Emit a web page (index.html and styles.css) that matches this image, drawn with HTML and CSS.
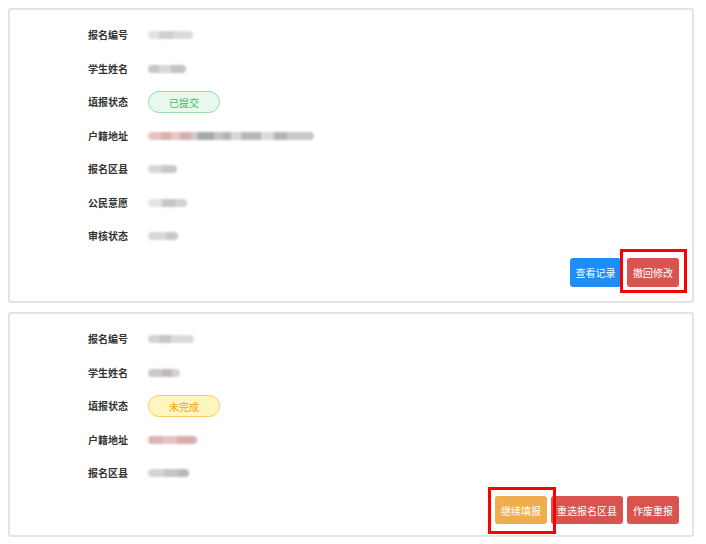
FILE: index.html
```html
<!DOCTYPE html>
<html lang="zh">
<head>
<meta charset="utf-8">
<link rel="stylesheet" href="styles.css">
</head>
<body>
<div class="card card-1">
  <div class="rows">
    <div class="row"><span class="label">报名编号</span><span class="blob b-g45"></span></div>
    <div class="row"><span class="label">学生姓名</span><span class="blob b-g38"></span></div>
    <div class="row"><span class="label">填报状态</span><span class="badge badge-ok">已提交</span></div>
    <div class="row"><span class="label">户籍地址</span><span class="blob b-addr"></span></div>
    <div class="row"><span class="label">报名区县</span><span class="blob b-g29"></span></div>
    <div class="row"><span class="label">公民意愿</span><span class="blob b-g39"></span></div>
    <div class="row"><span class="label">审核状态</span><span class="blob b-g30"></span></div>
  </div>
  <div class="actions actions-1">
    <button class="btn btn-blue btn-narrow">查看记录</button>
    <span class="mark-wrap"><button class="btn btn-red">撤回修改</button><span class="mark mark-1"></span></span>
  </div>
</div>
<div class="card card-2">
  <div class="rows">
    <div class="row"><span class="label">报名编号</span><span class="blob b-g46"></span></div>
    <div class="row"><span class="label">学生姓名</span><span class="blob b-g32"></span></div>
    <div class="row"><span class="label">填报状态</span><span class="badge badge-warn">未完成</span></div>
    <div class="row"><span class="label">户籍地址</span><span class="blob b-pink"></span></div>
    <div class="row"><span class="label">报名区县</span><span class="blob b-g41"></span></div>
  </div>
  <div class="actions actions-2">
    <span class="mark-wrap"><button class="btn btn-orange">继续填报</button><span class="mark mark-2"></span></span>
    <button class="btn btn-red">重选报名区县</button>
    <button class="btn btn-red">作废重报</button>
  </div>
</div>
</body>
</html>
```
FILE: styles.css
```css
* { box-sizing: border-box; }
html, body { background: #ffffff; }
body {
  margin: 8px;
  font-family: "Noto Sans CJK SC", "Noto Sans", sans-serif;
  font-size: 10px;
  color: #333;
}
.card {
  width: 686px;
  border: 2px solid #e4e4e4;
  border-radius: 3px;
  background: #fff;
  padding: 14px 13px 14px 78px;
}
.card-1 { height: 295px; }
.card-2 { height: 225px; margin-top: 9px; padding-bottom: 12px; }
.rows {
  display: flex;
  flex-direction: column;
  gap: 11.5px;
}
.row {
  display: flex;
  align-items: center;
  height: 22px;
}
.label {
  width: 60px;
  font-weight: 700;
  color: #333;
  line-height: 22px;
}
.blob {
  display: block;
  height: 8px;
  border-radius: 4px;
  filter: blur(1.2px);
  background: #d4d4d4;
}
.b-g45 { width: 45px; background: linear-gradient(90deg, #e2e2e2 0 25%, #cfcfcf 25% 55%, #dadada 55% 100%); }
.b-g38 { width: 38px; background: linear-gradient(90deg, #c8c8c8 0 30%, #d8d8d8 30% 60%, #c4c4c4 60% 100%); }
.b-g29 { width: 29px; background: linear-gradient(90deg, #d6d6d6 0 50%, #c8c8c8 50% 100%); }
.b-g39 { width: 39px; background: linear-gradient(90deg, #e4e4e4 0 35%, #c6c6c6 35% 70%, #d2d2d2 70% 100%); }
.b-g30 { width: 30px; background: linear-gradient(90deg, #d8d8d8 0 60%, #c8c8c8 60% 100%); }
.b-g46 { width: 46px; background: linear-gradient(90deg, #d4d4d4 0 25%, #c6c6c6 25% 50%, #dadada 50% 100%); }
.b-g32 { width: 32px; background: linear-gradient(90deg, #cacaca 0 45%, #c2b8be 45% 75%, #d2d2d2 75% 100%); }
.b-g41 { width: 41px; background: linear-gradient(90deg, #d4d4d4 0 40%, #c6c6c6 40% 75%, #b8b8b8 75% 100%); }
.b-pink { width: 49px; background: linear-gradient(90deg, #dcb4b4 0 30%, #e2c2c2 30% 60%, #d8aeae 60% 100%); }
.b-addr {
  width: 166px;
  background: linear-gradient(90deg,
    #e4c2c2 0 8%, #dbb0b0 8% 14%, #e4c8c8 14% 19%, #d8aeae 19% 25%,
    #d0c6c6 25% 30%, #a8a8a8 30% 40%, #c4c4c4 40% 45%, #b4b4b4 45% 50%,
    #d8d8d8 50% 56%, #b8b8b8 56% 68%, #dadada 68% 76%, #b4b4b4 76% 84%, #cacaca 84% 100%);
}
.badge {
  display: inline-flex;
  align-items: center;
  justify-content: center;
  width: 72px;
  height: 22px;
  border-radius: 11px;
  font-size: 10px;
}
.badge-ok { background: #e8f8ec; border: 1px solid #9adaa9; color: #47b85e; }
.badge-warn { background: #fff6bf; border: 1px solid #f4cf5a; color: #f1a10f; }
.actions {
  display: flex;
  justify-content: flex-end;
  gap: 5px;
}
.actions-1 { margin-top: 11px; gap: 6px; }
.actions-2 { margin-top: 12px; gap: 4px; }
.btn {
  display: block;
  height: 29px;
  padding: 0 6px;
  border: none;
  border-radius: 3px;
  font-family: inherit;
  font-size: 10px;
  color: #fff;
  cursor: pointer;
}
.actions-2 .btn { height: 28px; }
.btn-narrow { padding: 0 5.5px; }
.btn-blue { background: #1e8df5; }
.btn-red { background: #d9534f; }
.btn-orange { background: #f0ad4e; }
.mark-wrap { position: relative; display: block; }
.mark {
  position: absolute;
  border: 3px solid #ff0000;
  pointer-events: none;
}
.mark-1 { left: -7px; right: -8px; top: -9px; bottom: -6px; }
.mark-2 { left: -7px; right: -9px; top: -9px; bottom: -10px; }
```
